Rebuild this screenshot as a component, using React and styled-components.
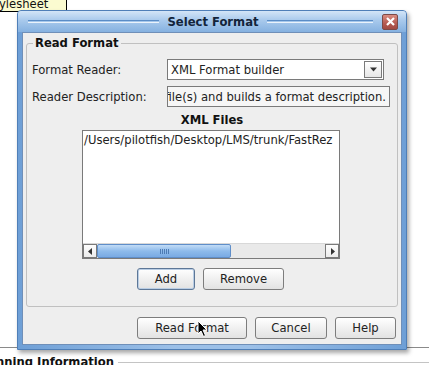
import React from 'react';
import styled, { createGlobalStyle } from 'styled-components';

const GlobalStyle = createGlobalStyle`
  html, body {
    margin: 0;
    padding: 0;
    background: #ffffff;
    overflow: hidden;
  }
  body {
    font-family: "DejaVu Sans", "Liberation Sans", sans-serif;
    font-size: 11.6px;
    color: #222;
  }
`;

const Page = styled.div`
  position: relative;
  width: 429px;
  height: 365px;
  overflow: hidden;
  background: #fff;
`;

const TipBox = styled.div`
  width: 66px;
  height: 11px;
  background: #fbfbd0;
  border-right: 1px solid #000;
  border-bottom: 1px solid #000;
  line-height: 8px;
  overflow: hidden;
  color: #111;
  text-indent: -1px;
`;

const Separator = styled.div`
  margin-top: 335px;
  height: 1px;
  background: #8a8a8a;
`;

const ScanHeader = styled.div`
  display: flex;
  align-items: center;
  gap: 4px;
  margin-top: 7px;
  height: 14px;
  font-weight: bold;
  color: #111;
  text-indent: -4px;
  &::after {
    content: '';
    flex: 1;
    height: 1px;
    background: #c4c4c4;
  }
`;

const Dialog = styled.div`
  position: absolute;
  left: 17px;
  top: 10px;
  width: 390px;
  height: 340px;
  box-sizing: border-box;
  border: 1px solid #4f7fb8;
  border-radius: 4px 4px 0 0;
  background: linear-gradient(90deg, #6e9fd6, #9cc0e8 40%, #9cc0e8 60%, #6e9fd6);
  padding: 0 4px 4px 4px;
  display: flex;
  flex-direction: column;
  box-shadow: 2px 3px 4px rgba(0, 0, 0, 0.35);
`;

const TitleBar = styled.div`
  height: 21px;
  margin: 0 -4px;
  padding: 0 8px 0 10px;
  display: grid;
  grid-template-columns: 1fr auto 1fr;
  align-items: center;
  column-gap: 6px;
  border-radius: 3px 3px 0 0;
  background: linear-gradient(#d3e5f7, #a8c9ec 45%, #85b1e0 100%);
`;

const TitleSide = styled.div`
  display: flex;
  align-items: center;
`;

const TitleRule = styled.div`
  flex: 1;
  height: 1px;
  border-top: 1px solid #5a8cc6;
  border-bottom: 1px solid #eaf2fb;
`;

const Title = styled.div`
  font-weight: bold;
  color: #13243a;
  padding: 0 2px;
`;

const CloseBtn = styled.div`
  width: 14px;
  height: 14px;
  margin-left: 9px;
  border: 1px solid #7b4a48;
  border-radius: 2px;
  background: linear-gradient(#d98c80, #b55a52 60%, #a14942);
  display: flex;
  align-items: center;
  justify-content: center;
`;

const Body = styled.div`
  flex: 1;
  background: #eeeeee;
  border: 1px solid #6f8fb8;
  padding: 3px 3px 0 3px;
  display: flex;
  flex-direction: column;
`;

const Group = styled.fieldset`
  margin: 0;
  padding: 9px 0 0 5px;
  height: 271px;
  box-sizing: border-box;
  border: 1px solid #c0c0c0;
  border-radius: 3px;
  display: flex;
  flex-direction: column;
`;

const Legend = styled.legend`
  font-weight: bold;
  color: #111;
  padding: 0 2px;
  margin-left: 1px;
`;

const FormRow = styled.div`
  display: flex;
  align-items: center;
  height: 21px;
  margin-bottom: 6px;
`;

const Label = styled.div`
  width: 135px;
  color: #222;
`;

const Combo = styled.div`
  width: 217px;
  height: 21px;
  box-sizing: border-box;
  border: 1px solid #7a7a7a;
  background: #fff;
  display: flex;
  align-items: center;
  padding-left: 3px;
`;

const ComboText = styled.div`
  flex: 1;
`;

const ArrowBox = styled.div`
  width: 16px;
  height: 15px;
  margin-right: 1px;
  border: 1px solid #7a7a7a;
  background: linear-gradient(#ffffff, #e6e6e6);
  display: flex;
  align-items: center;
  justify-content: center;
`;

const TextField = styled.div`
  width: 223px;
  height: 21px;
  box-sizing: border-box;
  border: 1px solid #7a7a7a;
  background: #f6f6f6;
  display: flex;
  align-items: center;
  justify-content: flex-end;
  overflow: hidden;
  white-space: nowrap;
  padding-right: 3px;
`;

const SectionTitle = styled.div`
  font-weight: bold;
  color: #111;
  text-align: center;
  margin: 0 0 3px -5px;
  line-height: 14px;
`;

const ListWrap = styled.div`
  align-self: center;
  margin-left: -7px;
  width: 258px;
  height: 129px;
  box-sizing: border-box;
  border: 1px solid #7a7a7a;
  background: #fff;
  display: flex;
  flex-direction: column;
`;

const ListItem = styled.div`
  flex: 1;
  padding: 2px 0 0 1px;
  white-space: nowrap;
  overflow: hidden;
`;

const HScroll = styled.div`
  height: 14px;
  display: flex;
  background: #e9e9e9;
  border-top: 1px solid #d8d8d8;
`;

const ScrollArrow = styled.div`
  width: 14px;
  box-sizing: border-box;
  border: 1px solid #7a7a7a;
  background: linear-gradient(#fdfdfd, #ececec);
  display: flex;
  align-items: center;
  justify-content: center;
`;

const Track = styled.div`
  flex: 1;
  display: flex;
`;

const Thumb = styled.div`
  width: 134px;
  box-sizing: border-box;
  border: 1px solid #5f8ec9;
  border-radius: 2px;
  background: linear-gradient(#c2dcf6, #8ebbeb 50%, #79aae3);
  display: flex;
  align-items: center;
  justify-content: center;
  gap: 1px;
`;

const Grip = styled.div`
  width: 1px;
  height: 5px;
  background: #4d7bb4;
`;

const ButtonRow = styled.div`
  display: flex;
  justify-content: ${p => p.$end ? 'flex-end' : 'center'};
  gap: 8px;
  margin: ${p => p.$end ? '10px 2px 0 0' : '9px 0 0 -8px'};
`;

const Button = styled.button`
  height: 22px;
  width: ${p => p.$w}px;
  box-sizing: border-box;
  border: 1px solid ${p => p.$focus ? '#5d7797' : '#7d7d7d'};
  box-shadow: ${p => p.$focus ? 'inset 0 0 0 1px #b9cde4' : 'none'};
  border-radius: 3px;
  background: linear-gradient(#ffffff, #f0f0f0 50%, #e2e2e2);
  font-family: "DejaVu Sans", "Liberation Sans", sans-serif;
  font-size: 11.6px;
  color: #222;
  padding: 0;
`;

const Cursor = styled.svg`
  position: absolute;
  left: 197px;
  top: 320px;
`;

function Triangle({ dir }) {
  const pts = {
    down: '1,2 8,2 4.5,6',
    left: '5,1 5,8 1,4.5',
    right: '2,1 2,8 6,4.5',
  }[dir];
  return (
    <svg width={dir === 'down' ? 9 : 7} height="9" viewBox={dir === 'down' ? '0 0 9 8' : '0 0 7 9'}>
      <polygon points={pts} fill="#333" />
    </svg>
  );
}

export default function App() {
  return (
    <Page>
      <GlobalStyle />
      <TipBox>ylesheet</TipBox>
      <Separator />
      <ScanHeader>nning Information</ScanHeader>

      <Dialog>
        <TitleBar>
          <TitleSide><TitleRule /></TitleSide>
          <Title>Select Format</Title>
          <TitleSide>
            <TitleRule />
            <CloseBtn>
              <svg width="9" height="9" viewBox="0 0 9 9">
                <path d="M1 1 L8 8 M8 1 L1 8" stroke="#fff" strokeWidth="2.2" />
              </svg>
            </CloseBtn>
          </TitleSide>
        </TitleBar>
        <Body>
          <Group>
            <Legend>Read Format</Legend>
            <FormRow>
              <Label>Format Reader:</Label>
              <Combo>
                <ComboText>XML Format builder</ComboText>
                <ArrowBox><Triangle dir="down" /></ArrowBox>
              </Combo>
            </FormRow>
            <FormRow>
              <Label>Reader Description:</Label>
              <TextField>file(s) and builds a format description.</TextField>
            </FormRow>
            <SectionTitle>XML Files</SectionTitle>
            <ListWrap>
              <ListItem>/Users/pilotfish/Desktop/LMS/trunk/FastRez</ListItem>
              <HScroll>
                <ScrollArrow><Triangle dir="left" /></ScrollArrow>
                <Track>
                  <Thumb>
                    <Grip /><Grip /><Grip /><Grip /><Grip />
                  </Thumb>
                </Track>
                <ScrollArrow><Triangle dir="right" /></ScrollArrow>
              </HScroll>
            </ListWrap>
            <ButtonRow>
              <Button $w={58} $focus>Add</Button>
              <Button $w={81}>Remove</Button>
            </ButtonRow>
          </Group>
          <ButtonRow $end>
            <Button $w={110}>Read Format</Button>
            <Button $w={72}>Cancel</Button>
            <Button $w={61}>Help</Button>
          </ButtonRow>
        </Body>
      </Dialog>

      <Cursor width="12" height="18" viewBox="0 0 12 18">
        <path d="M1 1 L1 14 L4 11 L6.5 16.5 L8.5 15.5 L6 10 L10 10 Z" fill="#000" stroke="#fff" strokeWidth="1" />
      </Cursor>
    </Page>
  );
}
